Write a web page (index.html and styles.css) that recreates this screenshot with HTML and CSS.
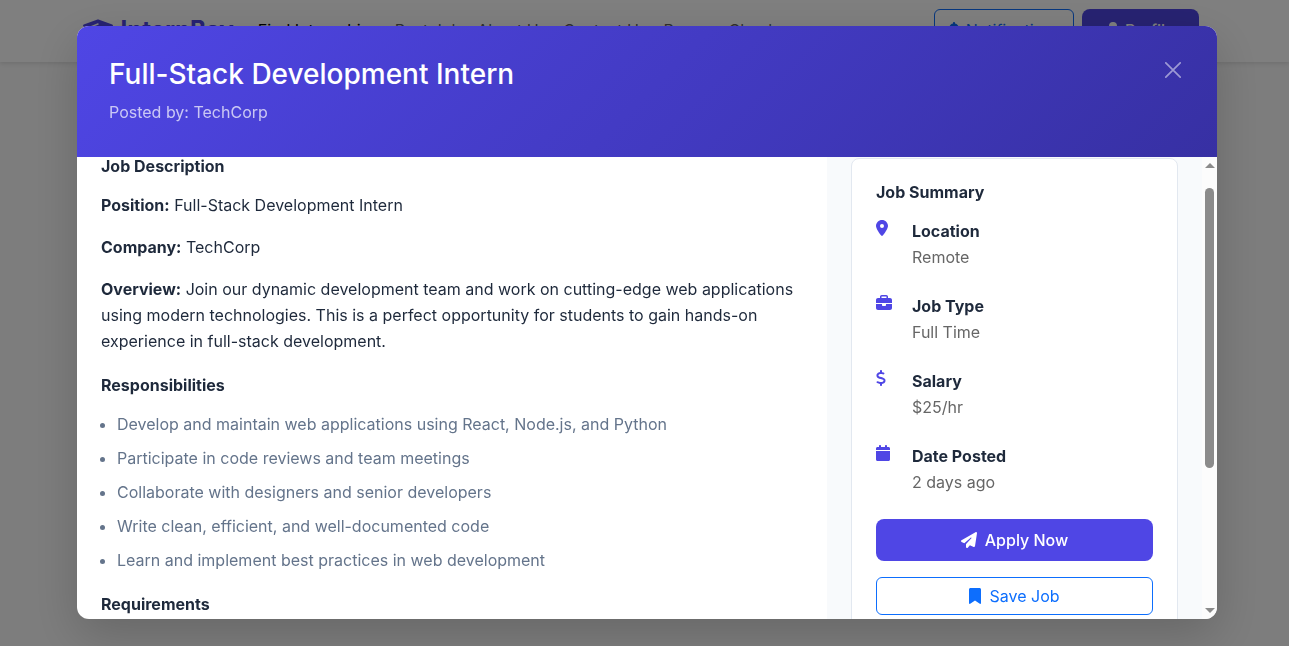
FILE: index.html
```html
<!DOCTYPE html>
<html lang="en">
<head>
<meta charset="utf-8">
<title>Full-Stack Development Intern</title>
<link rel="stylesheet" href="styles.css">
</head>
<body>
<header class="navbar">
  <div class="nav-container">
    <a class="brand" href="#">
      <svg class="brand-icon" viewBox="0 0 640 512" aria-hidden="true"><path d="M320 32c-8.100 0-16.100 1.400-23.700 4.100L15.800 137.400C6.300 140.900 0 149.900 0 160s6.300 19.100 15.800 22.600l57.900 20.900C57.300 229.300 48 259.800 48 291.900v28.100c0 28.400-10.800 57.700-22.300 80.800-6.500 13-13.900 25.800-22.500 37.600-3.200 4.300-4.100 9.900-2.300 15s6 8.900 11.200 10.200l64 16c4.200 1.100 8.700.3 12.400-2s6.300-6.100 7.100-10.400c8.600-42.800 4.300-81.200-2.100-108.700C90.300 344.300 86 329.800 80 316.500v-24.600c0-30.200 10.200-58.700 27.900-81.500 12.900-15.500 29.600-28 49.200-35.700l157-61.700c8.200-3.200 17.500.8 20.700 9s-.8 17.500-9 20.700l-157 61.700c-12.400 4.900-23.300 12.400-32.200 21.600l159.600 57.600c7.600 2.700 15.600 4.100 23.700 4.100s16.100-1.400 23.700-4.100l280.600-101c9.500-3.400 15.800-12.500 15.800-22.600s-6.300-19.100-15.800-22.600L343.700 36.100C336.100 33.400 328.100 32 320 32zM128 408c0 35.300 86 72 192 72s192-36.700 192-72l-15.300-145.400L354.500 314c-11.100 4-22.800 6-34.500 6s-23.500-2-34.500-6l-142.200-51.400L128 408z"/></svg>
      <span>InternBay</span>
    </a>
    <nav class="nav-links">
      <a class="active" href="#">Find Internships</a>
      <a href="#">Post Job</a>
      <a href="#">About Us</a>
      <a href="#">Contact Us</a>
      <a href="#">Resume Checker</a>
    </nav>
    <div class="nav-actions">
      <button class="btn btn-outline" type="button">
        <svg class="icon" viewBox="0 0 448 512" aria-hidden="true"><path d="M224 0c-17.700 0-32 14.300-32 32v19.200C119 66 64 130.600 64 208v19c0 47-17.300 92.400-48.500 127.600l-7.400 8.300c-8.400 9.400-10.400 22.900-5.300 34.400S19.400 416 32 416h384c12.600 0 24-7.400 29.200-18.900s3.100-25-5.300-34.400l-7.400-8.300C401.300 319.200 384 273.900 384 227v-19c0-77.400-55-142-128-156.800V32c0-17.700-14.300-32-32-32zm45.300 493.300c12-12 18.700-28.300 18.700-45.300H160c0 17 6.700 33.300 18.700 45.300S207 512 224 512s33.300-6.700 45.300-18.700z"/></svg>
        Notifications
      </button>
      <button class="btn btn-primary" type="button">
        <svg class="icon" viewBox="0 0 448 512" aria-hidden="true"><path d="M224 256a128 128 0 1 0 0-256 128 128 0 1 0 0 256zm-45.700 48C79.800 304 0 383.800 0 482.300 0 498.700 13.300 512 29.700 512h388.600c16.400 0 29.700-13.300 29.700-29.700 0-98.500-79.800-178.300-178.300-178.300h-91.400z"/></svg>
        Profile
      </button>
    </div>
  </div>
</header>

<div class="overlay">
  <section class="modal" role="dialog" aria-modal="true" aria-labelledby="job-title">
    <header class="modal-header">
      <div>
        <h1 class="modal-title" id="job-title">Full-Stack Development Intern</h1>
        <p class="modal-subtitle">Posted by: TechCorp</p>
      </div>
      <button class="close" type="button" aria-label="Close">
        <svg viewBox="0 0 16 16" aria-hidden="true"><path d="M.8.8l14.400 14.400M15.200.8L.8 15.200"/></svg>
      </button>
    </header>
    <div class="modal-body">
      <div class="content">
        <article class="description">
          <h2 class="heading">Job Description</h2>
          <p><strong>Position:</strong> Full-Stack Development Intern</p>
          <p><strong>Company:</strong> TechCorp</p>
          <p><strong>Overview:</strong> Join our dynamic development team and work on cutting-edge web applications using modern technologies. This is a perfect opportunity for students to gain hands-on experience in full-stack development.</p>
          <h2 class="heading heading-spaced">Responsibilities</h2>
          <ul class="duties">
            <li>Develop and maintain web applications using React, Node.js, and Python</li>
            <li>Participate in code reviews and team meetings</li>
            <li>Collaborate with designers and senior developers</li>
            <li>Write clean, efficient, and well-documented code</li>
            <li>Learn and implement best practices in web development</li>
          </ul>
          <h2 class="heading heading-spaced">Requirements</h2>
        </article>
        <aside class="sidebar">
          <div class="card">
            <h2 class="heading">Job Summary</h2>
            <ul class="facts">
              <li>
                <svg class="icon" viewBox="0 0 384 512" aria-hidden="true"><path d="M215.700 499.200C267 435 384 279.400 384 192 384 86 298 0 192 0S0 86 0 192c0 87.400 117 243 168.300 307.200 12.300 15.300 35.100 15.300 47.400 0zM192 128a64 64 0 1 1 0 128 64 64 0 1 1 0-128z"/></svg>
                <div><strong>Location</strong><span>Remote</span></div>
              </li>
              <li>
                <svg class="icon" viewBox="0 0 512 512" aria-hidden="true"><path d="M184 48h144c4.400 0 8 3.600 8 8v40H176V56c0-4.400 3.600-8 8-8zm-56 8v40H64c-35.300 0-64 28.700-64 64v96h512v-96c0-35.300-28.700-64-64-64h-64V56c0-30.900-25.100-56-56-56H184c-30.900 0-56 25.100-56 56zm384 232H320v32c0 17.700-14.300 32-32 32h-64c-17.700 0-32-14.300-32-32v-32H0v128c0 35.300 28.700 64 64 64h384c35.300 0 64-28.700 64-64V288z"/></svg>
                <div><strong>Job Type</strong><span>Full Time</span></div>
              </li>
              <li>
                <svg class="icon" viewBox="0 0 320 512" aria-hidden="true"><path d="M160 0c17.700 0 32 14.300 32 32v35.700c1.600.2 3.100.4 4.700.7.400.1.700.1 1.100.2l48 8.800c17.400 3.200 28.900 19.900 25.700 37.200s-19.900 28.900-37.200 25.700l-47.500-8.700c-31.300-4.600-58.900-1.500-78.300 6.200s-27.200 18.300-29 28.100c-2 10.700-.5 16.700 1.200 20.400 1.800 3.900 5.500 8.300 12.800 13.200 16.300 10.700 41.300 17.700 73.700 26.300l2.900.8c28.600 7.600 63.600 16.800 89.600 33.800 14.200 9.300 27.600 21.900 35.900 39.500 8.500 17.900 10.300 37.900 6.400 59.200-6.900 38-33.100 63.400-65.600 76.700-13.700 5.600-28.600 9.200-44.400 11V480c0 17.700-14.300 32-32 32s-32-14.300-32-32v-34.900c-.4-.1-.9-.1-1.300-.2h-.2c-24.400-3.800-64.500-14.300-91.500-26.300-16.100-7.200-23.400-26.100-16.200-42.200s26.100-23.400 42.200-16.200c20.900 9.300 55.300 18.500 75.200 21.600 31.900 4.700 58.200 2 76-5.300 16.900-6.900 24.600-16.900 26.800-28.900 1.900-10.600.4-16.700-1.300-20.400-1.900-4-5.600-8.400-13-13.300-16.400-10.700-41.500-17.700-74-26.300l-2.800-.7c-28.500-7.600-63.500-16.900-89.500-33.900-14.200-9.300-27.500-22-35.800-39.600-8.400-17.900-10.100-37.900-6.100-59.200C23.700 116 52.300 91.200 84.800 78.300c13.300-5.300 27.900-8.900 43.200-11V32c0-17.700 14.300-32 32-32z"/></svg>
                <div><strong>Salary</strong><span>$25/hr</span></div>
              </li>
              <li>
                <svg class="icon" viewBox="0 0 448 512" aria-hidden="true"><path d="M96 32v32H48C21.500 64 0 85.500 0 112v48h448v-48c0-26.500-21.500-48-48-48h-48V32c0-17.700-14.300-32-32-32s-32 14.300-32 32v32H160V32c0-17.700-14.300-32-32-32S96 14.300 96 32zm352 160H0v272c0 26.500 21.500 48 48 48h352c26.500 0 48-21.500 48-48V192z"/></svg>
                <div><strong>Date Posted</strong><span>2 days ago</span></div>
              </li>
            </ul>
            <button class="btn btn-primary" type="button">
              <svg class="icon" viewBox="0 0 512 512" aria-hidden="true"><path d="M498.100 5.600c10.100 7 15.400 19.100 13.500 31.200l-64 416c-1.500 9.700-7.400 18.200-16 23s-18.900 5.400-28 1.600L284 427.700l-68.500 74.100c-8.900 9.700-22.900 12.900-35.200 8.100S160 493.200 160 480v-83.600c0-4 1.500-7.800 4.200-10.800l167.600-182.800c5.800-6.300 5.600-16-.4-22s-15.700-6.400-22-.7L106 360.800l-88.300-44.200C7.100 311.300.3 300.700 0 288.900s5.900-22.800 16.100-28.700l448-256c10.700-6.100 23.900-5.500 34 1.400z"/></svg>
              Apply Now
            </button>
            <button class="btn btn-outline" type="button">
              <svg class="icon" viewBox="0 0 384 512" aria-hidden="true"><path d="M0 48v439.700C0 501.100 10.900 512 24.300 512c5 0 9.900-1.500 14-4.400L192 400l153.700 107.600c4.100 2.900 9 4.400 14 4.400 13.400 0 24.300-10.900 24.300-24.300V48c0-26.500-21.500-48-48-48H48C21.500 0 0 21.500 0 48z"/></svg>
              Save Job
            </button>
          </div>
        </aside>
      </div>
      <div class="scrollbar" aria-hidden="true">
        <span class="arrow arrow-up"></span>
        <span class="track"><span class="thumb"></span></span>
        <span class="arrow arrow-down"></span>
      </div>
    </div>
  </section>
</div>
</body>
</html>
```
FILE: styles.css
```css
:root {
  --primary: #4f46e5;
  --primary-dark: #3730a3;
  --blue: #0d6efd;
  --text: #1e293b;
  --muted: #64748b;
  --border: #e2e8f0;
}

* {
  box-sizing: border-box;
}

body {
  margin: 0;
  min-height: 100vh;
  background: #fafafa;
  color: var(--text);
  font-family: Inter, "Liberation Sans", sans-serif;
  font-size: 16px;
  line-height: 26px;
  overflow: hidden;
}

h1, h2, p, ul {
  margin: 0;
}

a {
  color: inherit;
  text-decoration: none;
}

button {
  font: inherit;
  cursor: pointer;
}

strong {
  font-weight: 700;
}

.icon {
  height: 16px;
  fill: currentColor;
}

/* Navigation */
.navbar {
  background: #fff;
  box-shadow: 0 2px 4px rgba(0, 0, 0, 0.1);
}

.nav-container {
  display: flex;
  align-items: center;
  min-height: 62px;
  margin: 0 auto;
  padding: 0 16px 2px 8px;
  max-width: 1140px;
}

.brand {
  display: flex;
  align-items: center;
  gap: 8px;
  margin-right: 24px;
  color: var(--primary);
  font-size: 24px;
  font-weight: 700;
}

.brand-icon {
  height: 24px;
  fill: currentColor;
}

.nav-links {
  display: flex;
  gap: 16px;
  color: rgba(0, 0, 0, 0.65);
}

.nav-links .active {
  color: #000;
}

.nav-actions {
  display: flex;
  gap: 8px;
  margin-left: auto;
}

/* Buttons */
.btn {
  display: flex;
  align-items: center;
  justify-content: center;
  gap: 8px;
  border: 0;
  border-radius: 8px;
}

.nav-actions .btn {
  gap: 5px;
}

.btn-primary {
  padding: 8px 24px;
  background: var(--primary);
  color: #fff;
  font-weight: 500;
}

.btn-outline {
  padding: 5px 12px;
  background: transparent;
  border: 1px solid var(--blue);
  border-radius: 6px;
  color: var(--blue);
}

/* Modal */
.overlay {
  position: fixed;
  inset: 0;
  display: flex;
  padding: 26px 72px 27px 77px;
  background: rgba(0, 0, 0, 0.5);
}

.modal {
  display: flex;
  flex: 1;
  flex-direction: column;
  min-width: 0;
  overflow: hidden;
  background: #fff;
  border-radius: 12px;
  box-shadow: 0 16px 48px rgba(0, 0, 0, 0.18);
}

.modal-header {
  display: flex;
  align-items: flex-start;
  justify-content: space-between;
  padding: 32px;
  background: linear-gradient(135deg, var(--primary), var(--primary-dark));
  color: #fff;
}

.modal-title {
  margin-bottom: 8px;
  font-size: 28px;
  font-weight: 500;
  line-height: 33px;
}

.modal-subtitle {
  opacity: 0.7;
}

.close {
  display: flex;
  padding: 4px;
  background: none;
  border: 0;
  opacity: 0.5;
}

.close svg {
  width: 16px;
  height: 16px;
  fill: none;
  stroke: #fff;
  stroke-width: 1.7;
  stroke-linecap: round;
}

.modal-body {
  display: flex;
  flex: 1;
  min-height: 0;
  overflow: hidden;
}

.content {
  display: grid;
  flex: 1;
  grid-template-columns: 2fr 1fr;
  min-height: 0;
}

.description {
  padding: 0 24px;
}

.heading {
  margin-bottom: 16px;
  font-size: 16px;
  font-weight: 700;
  line-height: 19px;
}

.description p {
  margin-bottom: 16px;
}

.description .heading-spaced {
  margin-top: 22px;
}

.duties {
  display: grid;
  gap: 8px;
  padding-left: 16px;
  color: var(--muted);
}

.sidebar {
  padding: 1px 24px 0;
  background: #f8fafc;
}

.card {
  padding: 24px;
  background: #fff;
  border: 1px solid var(--border);
  border-radius: 8px;
}

.facts {
  display: grid;
  gap: 23px;
  padding: 0;
  list-style: none;
}

.facts li {
  display: grid;
  grid-template-columns: 20px 1fr;
  gap: 16px;
}

.facts .icon {
  margin-top: 2px;
  color: var(--primary);
}

.facts strong,
.facts span {
  display: block;
}

.facts span {
  color: #666;
}

.card .btn {
  width: 100%;
  margin-top: 24px;
}

.card .btn-outline {
  margin-top: 16px;
}

/* Scrollbar */
.scrollbar {
  display: flex;
  flex-direction: column;
  align-items: center;
  width: 15px;
  padding: 6px 0;
  background: #fcfcfc;
}

.arrow {
  border: 5px solid transparent;
}

.arrow-up {
  border-top: 0;
  border-bottom-color: #8b8b8b;
}

.arrow-down {
  border-bottom: 0;
  border-top-color: #8b8b8b;
}

.track {
  flex: 1;
  padding: 20px 0;
}

.thumb {
  display: block;
  width: 9px;
  height: 70%;
  background: #8b8b8b;
  border-radius: 5px;
}
```
